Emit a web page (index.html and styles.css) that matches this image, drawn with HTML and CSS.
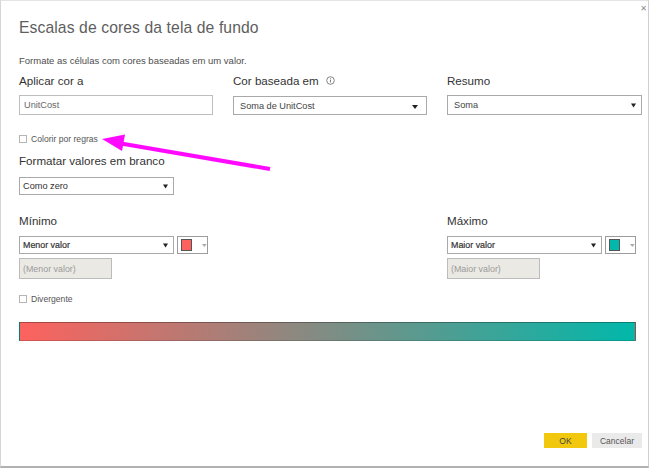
FILE: index.html
```html
<!DOCTYPE html>
<html lang="pt">
<head>
<meta charset="utf-8">
<title>Escalas de cores da tela de fundo</title>
<link rel="stylesheet" href="styles.css">
</head>
<body>
<div class="dialog">
  <span class="close">✕</span>
  <h1 class="title">Escalas de cores da tela de fundo</h1>
  <p class="desc">Formate as células com cores baseadas em um valor.</p>

  <div class="cols top-cols">
    <div class="field">
      <div class="lbl">Aplicar cor a</div>
      <div class="input">UnitCost</div>
    </div>
    <div class="field">
      <div class="lbl">Cor baseada em
        <svg class="info" width="9" height="9" viewBox="0 0 9 9"><circle cx="4.5" cy="4.5" r="3.8" fill="none" stroke="#777" stroke-width="0.9"/><rect x="4.05" y="3.7" width="0.9" height="2.8" fill="#777"/><rect x="4.05" y="2.3" width="0.9" height="0.9" fill="#777"/></svg>
      </div>
      <div class="select select-b"><span>Soma de UnitCost</span><svg class="caret caret-low" width="6" height="4" viewBox="0 0 6 4"><path d="M0 0H6L3 4Z" fill="#222"/></svg></div>
    </div>
    <div class="field">
      <div class="lbl">Resumo</div>
      <div class="select"><span>Soma</span><svg class="caret" width="5" height="5" viewBox="0 0 5 5"><path d="M0 0.5H5L2.5 4.5Z" fill="#222"/></svg></div>
    </div>
  </div>

  <div class="check check-rules"><span class="box"></span>Colorir por regras</div>

  <div class="lbl lbl-blank">Formatar valores em branco</div>
  <div class="select select-sm select-zero"><span>Como zero</span><svg class="caret" width="5" height="5" viewBox="0 0 5 5"><path d="M0 0.5H5L2.5 4.5Z" fill="#222"/></svg></div>

  <div class="cols minmax">
    <div class="field">
      <div class="lbl">Mínimo</div>
      <div class="pick">
        <div class="select select-sm select-val"><span>Menor valor</span><svg class="caret" width="5" height="5" viewBox="0 0 5 5"><path d="M0 0.5H5L2.5 4.5Z" fill="#222"/></svg></div>
        <div class="color"><span class="swatch swatch-red"></span><svg class="mini" width="5" height="3" viewBox="0 0 5 3"><path d="M0 0H5L2.5 3Z" fill="#aaa"/></svg></div>
      </div>
      <div class="disabled">(Menor valor)</div>
    </div>
    <div class="field"></div>
    <div class="field">
      <div class="lbl">Máximo</div>
      <div class="pick">
        <div class="select select-sm select-val"><span>Maior valor</span><svg class="caret" width="5" height="5" viewBox="0 0 5 5"><path d="M0 0.5H5L2.5 4.5Z" fill="#222"/></svg></div>
        <div class="color"><span class="swatch swatch-teal"></span><svg class="mini" width="5" height="3" viewBox="0 0 5 3"><path d="M0 0H5L2.5 3Z" fill="#aaa"/></svg></div>
      </div>
      <div class="disabled">(Maior valor)</div>
    </div>
  </div>

  <div class="check check-div"><span class="box"></span>Divergente</div>

  <div class="gradient"></div>

  <div class="footer">
    <button class="btn btn-ok">OK</button>
    <button class="btn btn-cancel">Cancelar</button>
  </div>

  <svg class="annot" width="650" height="468" viewBox="0 0 650 468">
    <line x1="270" y1="169" x2="121" y2="143.5" stroke="#ff0aff" stroke-width="4"/>
    <polygon points="102,139 125,134.5 122,151" fill="#ff0aff"/>
  </svg>
</div>
</body>
</html>
```

FILE: styles.css
```css
* { box-sizing: border-box; margin: 0; padding: 0; }

html, body {
  width: 650px;
  height: 468px;
  overflow: hidden;
  background: #fff;
}

body {
  font-family: "Liberation Sans", Arial, sans-serif;
  color: #333;
}

.dialog {
  position: relative;
  width: 649px;
  height: 468px;
  border-left: 1px solid #d6d6d6;
  border-top: 1px solid #e4e4e4;
  border-right: 1px solid #cfcfcf;
  border-bottom: 2px solid #b1b1b1;
  padding: 0 6px 18px 18px;
  display: flex;
  flex-direction: column;
  align-items: flex-start;
  overflow: hidden;
}

.close {
  position: absolute;
  right: 1px;
  top: 3px;
  font-size: 8px;
  line-height: 10px;
  color: #8a8a8a;
  font-family: "DejaVu Sans", sans-serif;
}

.title {
  font-size: 15.7px;
  line-height: 24px;
  font-weight: normal;
  color: #5e5e5e;
  margin-top: 15px;
  letter-spacing: 0.1px;
}

.desc {
  font-size: 9.5px;
  line-height: 14px;
  color: #4e4e4e;
  margin-top: 14px;
}

.cols {
  display: grid;
  grid-template-columns: 194px 194px 195px;
  column-gap: 20px;
}

.top-cols { margin-top: 4px; }

.field { display: flex; flex-direction: column; align-items: flex-start; }

.lbl {
  font-size: 11.6px;
  line-height: 18px;
  color: #333;
  display: flex;
  align-items: center;
  gap: 5px;
}

.info { margin-left: 2px; margin-top: -1px; }

.input {
  margin-top: 5px;
  width: 100%;
  height: 20px;
  border: 1px solid #bdbdbd;
  font-size: 9.2px;
  color: #666;
  padding-left: 4px;
  display: flex;
  align-items: center;
}

.select {
  width: 100%;
  height: 20px;
  margin-top: 5px;
  border: 1px solid #a9a9a9;
  display: flex;
  align-items: center;
  justify-content: space-between;
  padding: 0 5px 0 6px;
  font-size: 9.2px;
  color: #444;
}

.select-b { margin-top: 6px; height: 19px; padding-right: 8px; }
.caret-low { align-self: flex-end; margin-bottom: 5px; }

.check {
  display: flex;
  align-items: center;
  gap: 4px;
  height: 14px;
  font-size: 8.6px;
  color: #555;
}

.box {
  width: 8px;
  height: 8px;
  border: 1px solid #b4b4b4;
  background: #fff;
}

.check-rules { margin-top: 17px; }

.lbl-blank { margin-top: 6px; }

.select-sm { height: 18px; padding: 0 5px 0 3px; }
.select-zero { width: 155px; margin-top: 7px; color: #333; }

.minmax { margin-top: 17px; }

.pick { display: flex; gap: 3px; margin-top: 6px; }

.select-val { width: 155px; margin-top: 0; color: #333; font-size: 8.9px; }
.select-val span { -webkit-text-stroke: 0.2px #333; }

.color {
  width: 31px;
  height: 18px;
  border: 1px solid #9c9c9c;
  display: flex;
  align-items: center;
  padding-left: 3px;
  gap: 10px;
}

.swatch {
  width: 12px;
  height: 12px;
  border: 1px solid #555;
}
.swatch-red { background: #fd625e; }
.swatch-teal { background: #01b8aa; }

.disabled {
  margin-top: 4px;
  width: 93px;
  height: 21px;
  background: #ebe9e4;
  border: 1px solid #bcbcbc;
  color: #9a9a9a;
  font-size: 8.9px;
  padding-left: 3px;
  display: flex;
  align-items: center;
}

.check-div { margin-top: 13px; }

.gradient {
  margin-top: 16px;
  width: 617px;
  height: 19px;
  background: linear-gradient(to right, #fd625e, #01b8aa);
  border: 1px solid rgba(0, 0, 0, 0.3);
  border-bottom-color: rgba(0, 0, 0, 0.15);
}

.footer {
  margin-top: auto;
  align-self: stretch;
  display: flex;
  justify-content: flex-end;
  gap: 5px;
}

.btn {
  height: 15px;
  border: none;
  font-family: inherit;
  font-size: 8.5px;
  display: flex;
  align-items: center;
  justify-content: center;
}

.btn-ok { width: 43px; background: #f2c80f; color: #444; }
.btn-cancel { width: 50px; background: #eaeaea; color: #555; }

.annot {
  position: absolute;
  left: -1px;
  top: -1px;
  pointer-events: none;
}
```
